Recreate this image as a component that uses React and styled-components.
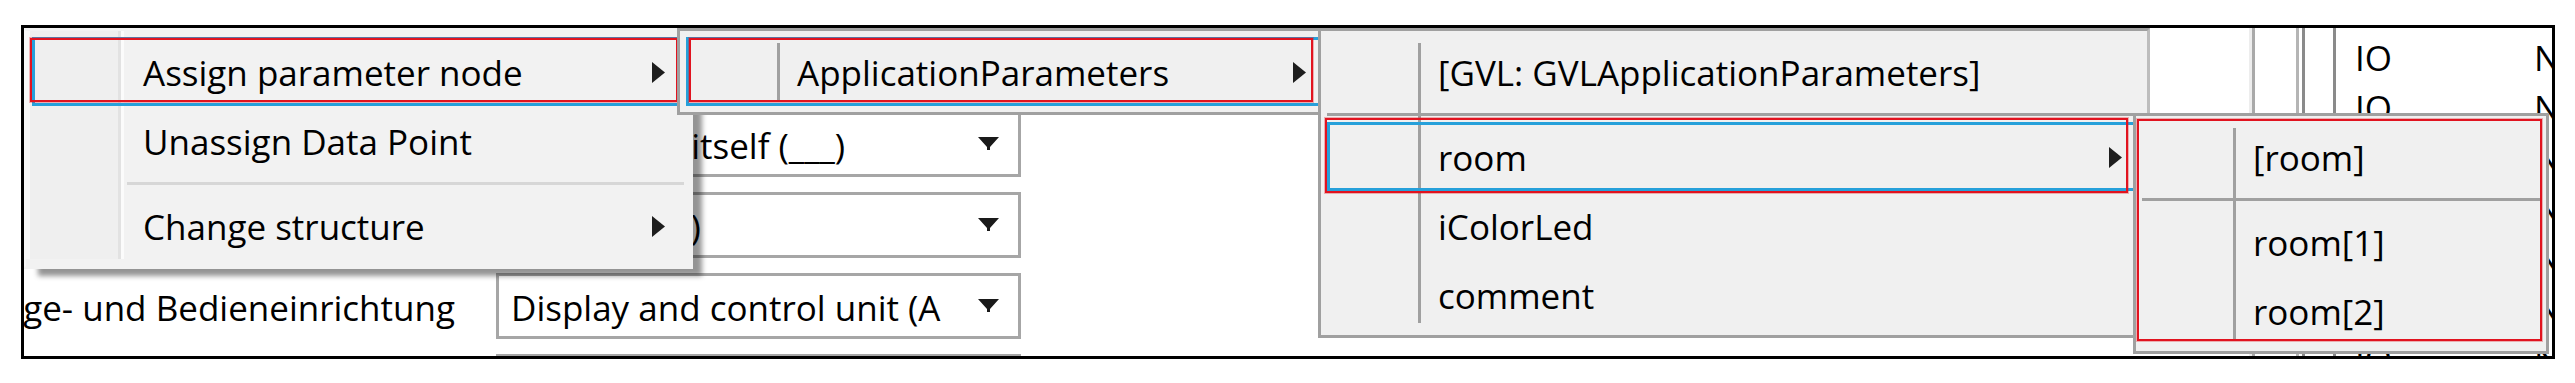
import React from "react";
import styled, { createGlobalStyle, css } from "styled-components";

const GlobalStyle = createGlobalStyle`
  html, body {
    margin: 0;
    padding: 0;
    background: #ffffff;
  }
  body {
    font-family: "Open Sans", "Noto Sans", sans-serif;
    font-size: 35px;
    color: #000000;
  }
`;

const Page = styled.div`
  padding: 25px 0 0 21px;
`;

const Frame = styled.div`
  position: relative;
  box-sizing: border-box;
  width: 2534px;
  height: 334px;
  border: 3px solid #000;
  background: #fff;
  overflow: hidden;
  display: flex;
  justify-content: space-between;
`;

/* property form underneath the menus */
const Form = styled.div`
  display: flex;
  flex-direction: column;
  gap: 15px;
  padding-top: 83px;
`;

const FieldRow = styled.div`
  display: flex;
  align-items: flex-start;
  gap: 41px;
`;

const Label = styled.div`
  width: 431px;
  display: flex;
  justify-content: flex-end;
  padding-top: 11px;
  line-height: 48px;
  white-space: nowrap;
`;

const Combo = styled.div`
  box-sizing: border-box;
  width: 525px;
  height: 66px;
  border: 3px solid #a6a6a6;
  background: #fff;
  display: flex;
  align-items: flex-start;
  gap: 12px;
  padding: 8px 19px 0 12px;
`;

const ComboText = styled.span`
  flex: 1;
  overflow: hidden;
  white-space: nowrap;
  line-height: 48px;
`;

const DropArrow = styled.svg`
  flex: none;
  margin-top: 15px;
`;

/* list on the right */
const Grid = styled.div`
  flex: none;
  display: flex;
  width: 303px;
`;

const GridLine = styled.div`
  flex: none;
  box-sizing: border-box;
  width: ${(p) => p.$w}px;
  border-left: 3px solid ${(p) => p.$c};
  ${(p) => p.$inner && css`box-shadow: inset 3px 0 0 ${p.$inner};`}
`;

const GridData = styled.div`
  flex: 1;
  border-left: 3px solid #8a8a8a;
  padding: 5px 0 0 19px;
`;

const GridRow = styled.div`
  display: grid;
  grid-template-columns: 179px auto;
  height: 50px;
  line-height: 50px;
  white-space: nowrap;
`;

/* context menus */
const Menu = styled.div`
  position: absolute;
  left: ${(p) => p.$x}px;
  top: ${(p) => p.$y}px;
  width: ${(p) => p.$w}px;
  z-index: ${(p) => p.$z};
  box-sizing: border-box;
  padding: 6px;
  background-repeat: no-repeat;

  ${(p) =>
    p.$light
      ? css`
          background-color: #f2f2f2;
          border: 3px solid #f2f2f2;
          border-left-color: #f8f8f8;
          background-image: linear-gradient(
            to right,
            #f8f8f8 0 4px,
            #efefef 4px 92px,
            #e2e2e2 92px 95px,
            #fbfbfb 95px 98px,
            transparent 98px
          );
          background-size: 100% calc(100% - 7px);
          box-shadow: 12px 10px 5px -3px rgba(0, 0, 0, 0.42);
        `
      : css`
          background-color: #f0f0f0;
          border: 3px solid #a0a0a0;
          border-right-color: ${p.$edge || "#a0a0a0"};
          background-image: linear-gradient(
            to right,
            transparent 97px,
            #a0a0a0 97px 100px,
            transparent 100px
          );
          background-position: 0 12px;
          background-size: 100% calc(100% - 24px);
        `}
`;

const Item = styled.div`
  position: relative;
  box-sizing: border-box;
  height: 69px;
  display: flex;
  align-items: flex-start;
  justify-content: space-between;
  padding: 12px 19px 0 111px;
  line-height: 48px;
  white-space: nowrap;
  ${(p) => p.$active && css`box-shadow: inset 0 0 0 3px #26a0da;`}
`;

const SubArrow = styled.svg`
  flex: none;
  margin-top: 13px;
`;

const Separator = styled.div`
  height: 16px;
  display: flex;
  align-items: center;
  padding-left: ${(p) => (p.$light ? 95 : 0)}px;

  &::before {
    content: "";
    flex: 1;
    height: 3px;
    background: ${(p) => (p.$light ? "#d7d7d7" : "#a0a0a0")};
  }
`;

// red annotation rectangle drawn over the screenshot
const Mark = styled.span`
  position: absolute;
  top: ${(p) => p.$t}px;
  left: ${(p) => p.$l}px;
  right: ${(p) => p.$r}px;
  bottom: ${(p) => p.$b}px;
  border: 2px solid #e1131f;
  box-shadow: 0 0 0 1px rgba(225, 19, 31, 0.3);
  pointer-events: none;
`;

const Chevron = () => (
  <SubArrow width="13" height="21" viewBox="0 0 13 21">
    <path d="M0 0L13 10.5L0 21Z" fill="#1e1e1e" />
  </SubArrow>
);

const Caret = () => (
  <DropArrow width="21" height="13" viewBox="0 0 21 13">
    <path d="M0 0H21L12 10V13H9V10Z" fill="#1a1a1a" />
  </DropArrow>
);

const fields = [
  { label: "", value: "Data point itself (___)" },
  { label: "", value: "Standard(1)" },
  { label: "Anzeige- und Bedieneinrichtung", value: "Display and control unit (A" },
  { label: "", value: "" },
];

const gridRows = ["IO", "IO", "IO", "IO", "IO", "IO", "IO"];

const App = () => (
  <>
    <GlobalStyle />
    <Page>
      <Frame>
        <Form>
          {fields.map((f, i) => (
            <FieldRow key={i}>
              <Label>{f.label}</Label>
              <Combo>
                <ComboText>{f.value}</ComboText>
                <Caret />
              </Combo>
            </FieldRow>
          ))}
        </Form>

        <Grid>
          <GridLine $w={47} $c="#ededed" $inner="#a9a9a9" />
          <GridLine $w={6} $c="#b5b5b5" />
          <GridLine $w={31} $c="#8a8a8a" />
          <GridData>
            {gridRows.map((r, i) => (
              <GridRow key={i}>
                <span>{r}</span>
                <span>No</span>
              </GridRow>
            ))}
          </GridData>
        </Grid>

        <Menu $light $x={-1} $y={0} $w={670} $z={1}>
          <Item $active>
            <span>Assign parameter node</span>
            <Chevron />
            <Mark $l={-2} $t={1} $r={6} $b={4} />
          </Item>
          <Item>
            <span>Unassign Data Point</span>
          </Item>
          <Separator $light />
          <Item>
            <span>Change structure</span>
            <Chevron />
          </Item>
        </Menu>

        <Menu $x={653} $y={0} $w={657} $z={2}>
          <Item $active>
            <span>ApplicationParameters</span>
            <Chevron />
            <Mark $l={3} $t={1} $r={12} $b={4} />
          </Item>
        </Menu>

        <Menu $x={1294} $y={0} $w={832} $z={3} $edge="#bdbdbd">
          <Item>
            <span>[GVL: GVLApplicationParameters]</span>
          </Item>
          <Separator />
          <Item $active>
            <span>room</span>
            <Chevron />
            <Mark $l={-2} $t={-4} $r={13} $b={-2} />
          </Item>
          <Item>
            <span>iColorLed</span>
          </Item>
          <Item>
            <span>comment</span>
          </Item>
        </Menu>

        <Menu $x={2109} $y={85} $w={416} $z={4}>
          <Item>
            <span>[room]</span>
          </Item>
          <Separator />
          <Item>
            <span>room[1]</span>
          </Item>
          <Item>
            <span>room[2]</span>
          </Item>
          <Mark $l={1} $t={3} $r={4} $b={10} />
        </Menu>
      </Frame>
    </Page>
  </>
);

export default App;
